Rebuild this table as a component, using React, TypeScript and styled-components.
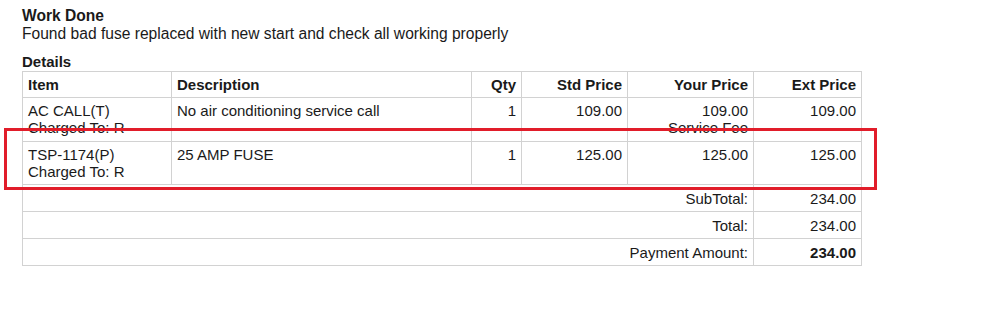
import React from 'react';
import styled, { createGlobalStyle } from 'styled-components';

const GlobalStyle = createGlobalStyle`
  body {
    margin: 0;
    background: #fff;
    font-family: "Liberation Sans", Arial, sans-serif;
    color: #1a1a1a;
  }
`;

const Page = styled.div`
  position: relative;
  width: 1000px;
  height: 336px;
  padding: 7px 0 0 22px;
  box-sizing: border-box;
  font-size: 15px;
  line-height: 18px;
`;

const Heading = styled.div<{ $size?: number }>`
  font-weight: bold;
  font-size: ${(p) => p.$size || 15}px;
`;

const Note = styled.div`
  font-size: 15.6px;
  margin-bottom: 10px;
`;

const Table = styled.table`
  border-collapse: collapse;
  width: 839px;
  table-layout: fixed;
  font-size: 15px;
  line-height: 17px;
`;

const Th = styled.th<{ $align?: 'left' | 'right' }>`
  border: 1px solid #d2d2d2;
  padding: 4px 5px 4px 5px;
  text-align: ${(p) => p.$align || 'left'};
  font-weight: bold;
  height: 17px;
`;

const Td = styled.td<{ $align?: 'left' | 'right'; $bold?: boolean }>`
  border: 1px solid #d2d2d2;
  padding: 4px 5px 4px 5px;
  vertical-align: top;
  text-align: ${(p) => p.$align || 'left'};
  font-weight: ${(p) => (p.$bold ? 'bold' : 'normal')};
`;

const ItemRow = styled.tr<{ $h: number }>`
  height: ${(p) => p.$h}px;
`;

const SumRow = styled.tr`
  height: 27px;
  td {
    vertical-align: middle;
    padding-top: 3px;
    padding-bottom: 3px;
  }
`;

const Highlight = styled.div`
  position: absolute;
  left: 4px;
  top: 128px;
  width: 867px;
  height: 56px;
  border: 3px solid #e11d2a;
  pointer-events: none;
`;

const items = [
  {
    code: 'AC CALL(T)',
    charged: 'R',
    desc: 'No air conditioning service call',
    qty: '1',
    std: '109.00',
    yours: '109.00',
    note: 'Service Fee',
    ext: '109.00',
    h: 44,
  },
  {
    code: 'TSP-1174(P)',
    charged: 'R',
    desc: '25 AMP FUSE',
    qty: '1',
    std: '125.00',
    yours: '125.00',
    note: '',
    ext: '125.00',
    h: 43,
  },
];

const totals = [
  { label: 'SubTotal:', value: '234.00', bold: false },
  { label: 'Total:', value: '234.00', bold: false },
  { label: 'Payment Amount:', value: '234.00', bold: true },
];

export default function App() {
  return (
    <Page>
      <GlobalStyle />
      <Heading $size={15.6}>Work Done</Heading>
      <Note>Found bad fuse replaced with new start and check all working properly</Note>
      <Heading>Details</Heading>
      <Table>
        <colgroup>
          <col style={{ width: 149 }} />
          <col style={{ width: 300 }} />
          <col style={{ width: 50 }} />
          <col style={{ width: 106 }} />
          <col style={{ width: 126 }} />
          <col style={{ width: 108 }} />
        </colgroup>
        <thead>
          <tr>
            <Th>Item</Th>
            <Th>Description</Th>
            <Th $align="right">Qty</Th>
            <Th $align="right">Std Price</Th>
            <Th $align="right">Your Price</Th>
            <Th $align="right">Ext Price</Th>
          </tr>
        </thead>
        <tbody>
          {items.map((it) => (
            <ItemRow key={it.code} $h={it.h}>
              <Td>
                {it.code}
                <br />
                Charged To: {it.charged}
              </Td>
              <Td>{it.desc}</Td>
              <Td $align="right">{it.qty}</Td>
              <Td $align="right">{it.std}</Td>
              <Td $align="right">
                {it.yours}
                {it.note && (
                  <>
                    <br />
                    {it.note}
                  </>
                )}
              </Td>
              <Td $align="right">{it.ext}</Td>
            </ItemRow>
          ))}
          {totals.map((t) => (
            <SumRow key={t.label}>
              <Td colSpan={5} $align="right">
                {t.label}
              </Td>
              <Td $align="right" $bold={t.bold}>
                {t.value}
              </Td>
            </SumRow>
          ))}
        </tbody>
      </Table>
      <Highlight />
    </Page>
  );
}
